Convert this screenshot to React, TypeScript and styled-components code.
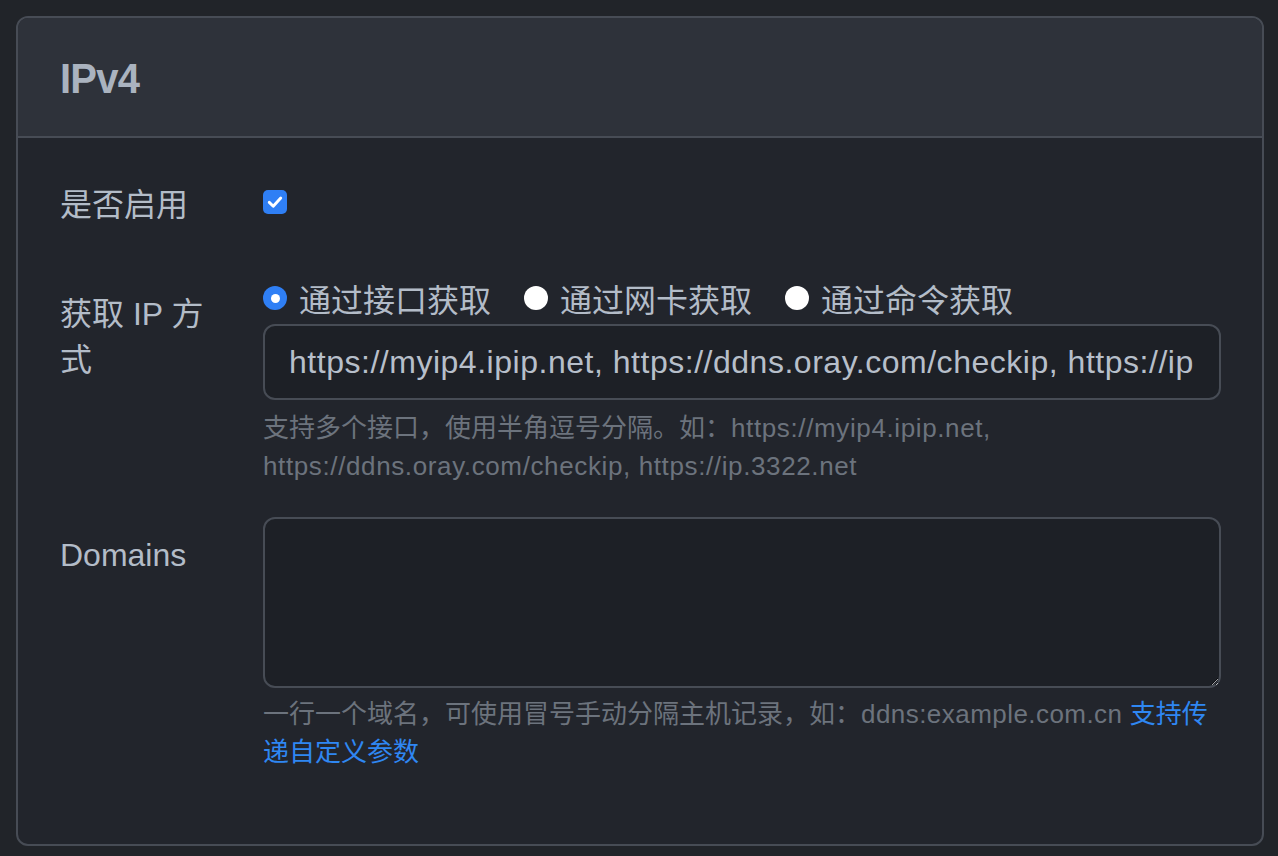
import React, { useState } from "react";
import styled, { createGlobalStyle } from "styled-components";

const GlobalStyle = createGlobalStyle`
  html, body {
    margin: 0;
    padding: 0;
    background: #212429;
    color-scheme: dark;
  }
  body {
    font-family: "Liberation Sans", "Noto Sans CJK SC", sans-serif;
  }
`;

const Page = styled.div`
  padding: 16px 14px 8px 16px;
  box-sizing: border-box;
  width: 1278px;
  height: 856px;
`;

const Card = styled.section`
  border: 2px solid #474c55;
  border-radius: 12px;
  overflow: hidden;
  background: #22252c;
`;

const CardHeader = styled.header`
  height: 120px;
  box-sizing: border-box;
  background: #2e323a;
  border-bottom: 2px solid #474c55;
  display: flex;
  align-items: center;
  padding: 2px 42px 0;
`;

const Title = styled.h5`
  margin: 0;
  font-size: 40px;
  font-weight: 700;
  color: #aab3bf;
  letter-spacing: -0.8px;
  transform: scaleY(1.08);
`;

const CardBody = styled.div`
  padding: 27px 41px 41px 42px;
  display: flex;
  flex-direction: column;
`;

const Row = styled.div<{ $after: number }>`
  display: grid;
  grid-template-columns: 203px 1fr;
  margin-bottom: ${(p) => p.$after}px;
`;

const Label = styled.label<{ $top: number }>`
  padding-top: ${(p) => p.$top}px;
  padding-right: 40px;
  font-size: 32px;
  line-height: 46px;
  color: #b3bcc8;
`;

const Control = styled.div<{ $top?: number }>`
  padding-top: ${(p) => p.$top ?? 0}px;
  display: flex;
  flex-direction: column;
  min-width: 0;
`;

const CheckBox = styled.span`
  width: 24px;
  height: 24px;
  border-radius: 5px;
  background: #2f7ff5;
  display: flex;
  align-items: center;
  justify-content: center;
`;

const RadioGroup = styled.div`
  display: flex;
  align-items: center;
  gap: 33px;
  height: 48px;
  margin-bottom: 2px;
`;

const RadioItem = styled.label`
  display: flex;
  align-items: center;
  gap: 12px;
  font-size: 32px;
  color: #b3bcc8;
  cursor: pointer;
`;

const RadioDot = styled.span<{ $on: boolean }>`
  width: 24px;
  height: 24px;
  border-radius: 50%;
  box-sizing: border-box;
  background: ${(p) => (p.$on ? "#2f7ff5" : "#ffffff")};
  display: flex;
  align-items: center;
  justify-content: center;
  &::after {
    content: "";
    width: 9px;
    height: 9px;
    border-radius: 50%;
    background: #ffffff;
    display: ${(p) => (p.$on ? "block" : "none")};
  }
`;

const TextInput = styled.input`
  height: 76px;
  box-sizing: border-box;
  border: 2px solid #474c55;
  border-radius: 12px;
  background: #1d2026;
  color: #b7bfca;
  font-family: "Liberation Sans", "Noto Sans CJK SC", sans-serif;
  font-size: 32px;
  letter-spacing: 0.52px;
  padding: 0 24px;
  outline: none;
  width: 100%;
`;

const TextArea = styled.textarea`
  height: 171px;
  box-sizing: border-box;
  border: 2px solid #474c55;
  border-radius: 12px;
  background: #1d2026;
  color: #b7bfca;
  font-family: "Liberation Sans", "Noto Sans CJK SC", sans-serif;
  font-size: 32px;
  padding: 12px 24px;
  outline: none;
  width: 100%;
  resize: vertical;
`;

const Help = styled.div<{ $top: number }>`
  margin-top: ${(p) => p.$top}px;
  font-size: 26px;
  line-height: 37.5px;
  color: #6c737d;
`;

const Latin = styled.span<{ $spacing: number }>`
  letter-spacing: ${(p) => p.$spacing}px;
`;

const HelpLink = styled.a`
  color: #2f87f2;
  text-decoration: none;
`;

const methods = ["通过接口获取", "通过网卡获取", "通过命令获取"];

export default function App() {
  const [method, setMethod] = useState(0);
  return (
    <>
      <GlobalStyle />
      <Page>
        <Card>
          <CardHeader>
            <Title>IPv4</Title>
          </CardHeader>
          <CardBody>
            <Row $after={46}>
              <Label $top={17}>是否启用</Label>
              <Control $top={25}>
                <CheckBox>
                  <svg width="20" height="20" viewBox="0 0 16 16" fill="none">
                    <path
                      d="M3.4 8.3 L6.6 11.4 L12.6 4.8"
                      stroke="#ffffff"
                      strokeWidth="2.3"
                      strokeLinecap="round"
                      strokeLinejoin="round"
                    />
                  </svg>
                </CheckBox>
              </Control>
            </Row>
            <Row $after={32}>
              <Label $top={17}>获取 IP 方式</Label>
              <Control>
                <RadioGroup>
                  {methods.map((m, i) => (
                    <RadioItem key={m} onClick={() => setMethod(i)}>
                      <RadioDot $on={method === i} />
                      {m}
                    </RadioItem>
                  ))}
                </RadioGroup>
                <TextInput
                  readOnly
                  value="https://myip4.ipip.net, https://ddns.oray.com/checkip, https://ip.3322.net"
                />
                <Help $top={10}>
                  支持多个接口，使用半角逗号分隔。如：
                  <Latin $spacing={0.62}>
                    https://myip4.ipip.net, https://ddns.oray.com/checkip,
                    https://ip.3322.net
                  </Latin>
                </Help>
              </Control>
            </Row>
            <Row $after={32}>
              <Label $top={15}>Domains</Label>
              <Control>
                <TextArea />
                <Help $top={8}>
                  一行一个域名，可使用冒号手动分隔主机记录，如：
                  <Latin $spacing={0.45}>ddns:example.com.cn</Latin>{" "}
                  <HelpLink href="#">支持传递自定义参数</HelpLink>
                </Help>
              </Control>
            </Row>
          </CardBody>
        </Card>
      </Page>
    </>
  );
}
